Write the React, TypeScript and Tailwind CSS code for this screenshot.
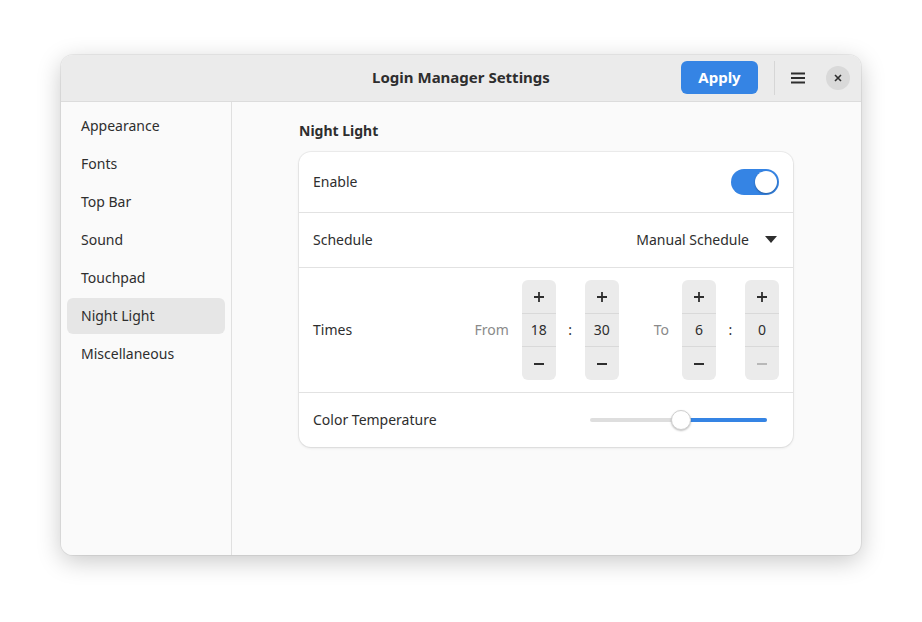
import React from "react";

const font = { fontFamily: '"Noto Sans", "Open Sans", sans-serif' };

function Spin({ value, minusDisabled }: { value: string; minusDisabled?: boolean }) {
  return (
    <div className="flex w-[34px] flex-col overflow-hidden rounded-[6px] bg-[#ebebeb] text-[#2e2e2e]">
      <div className="flex h-[34px] items-center justify-center border-b border-[#d9d9d9]">
        <svg width="12" height="12" viewBox="0 0 12 12"><path d="M6 1v10M1 6h10" stroke="#2e2e2e" strokeWidth="1.8" /></svg>
      </div>
      <div className="flex h-[32px] items-center justify-center pb-[1px] text-[14px]">{value}</div>
      <div className="flex h-[34px] items-center justify-center border-t border-[#d9d9d9]">
        <svg width="12" height="12" viewBox="0 0 12 12"><path d="M1 6h10" stroke={minusDisabled ? "#b8b8b8" : "#2e2e2e"} strokeWidth="1.8" /></svg>
      </div>
    </div>
  );
}

export default function App() {
  const items = ["Appearance", "Fonts", "Top Bar", "Sound", "Touchpad", "Night Light", "Miscellaneous"];
  return (
    <div className="flex h-[622px] w-[922px] bg-white pl-[61px] pt-[55px]" style={font}>
      <div className="flex h-[500px] w-[800px] flex-col overflow-hidden rounded-[12px] bg-[#fafafa] shadow-[0_0_0_1px_rgba(0,0,0,0.06),0_6px_24px_rgba(0,0,0,0.22)]">
        <div className="relative flex h-[47px] shrink-0 items-center border-b border-[#dcdcdc] bg-[#ebebeb] pb-[1px]">
          <div className="absolute inset-0 flex items-center justify-center pb-[1px] text-[15px] font-bold text-[#2e2e2e]">Login Manager Settings</div>
          <div className="relative ml-auto flex items-center pr-[11px]">
            <div className="flex h-[33px] w-[77px] items-center justify-center rounded-[6px] bg-[#3584e4] text-[15px] font-bold text-white">Apply</div>
            <div className="ml-[16px] h-[34px] w-px bg-[#d6d6d6]" />
            <div className="ml-[15px] flex h-[24px] w-[16px] items-center justify-center">
              <svg width="16" height="14" viewBox="0 0 16 14"><path d="M1 2.5h14M1 7h14M1 11.5h14" stroke="#2e2e2e" strokeWidth="1.8" /></svg>
            </div>
            <div className="ml-[20px] flex h-[24px] w-[24px] items-center justify-center rounded-full bg-[#d9d9d9]">
              <svg width="8" height="8" viewBox="0 0 8 8"><path d="M1 1l6 6M7 1L1 7" stroke="#2e2e2e" strokeWidth="1.6" /></svg>
            </div>
          </div>
        </div>
        <div className="flex min-h-0 flex-1">
          <div className="flex w-[171px] shrink-0 flex-col border-r border-[#e0e0e0] bg-[#fafafa] px-[6px] pt-[6px]">
            {items.map((it) => (
              <div
                key={it}
                className={`mb-[2px] flex h-[36px] items-center rounded-[6px] px-[14px] pb-[1px] text-[14px] text-[#2e2e2e] ${it === "Night Light" ? "bg-[#e6e6e6]" : ""}`}
              >
                {it}
              </div>
            ))}
          </div>
          <div className="flex flex-1 flex-col pl-[67px] pt-[18px]">
            <div className="mb-[12px] h-[20px] text-[14px] font-bold text-[#2e2e2e]">Night Light</div>
            <div className="w-[494px] rounded-[12px] bg-white text-[14px] text-[#2e2e2e] shadow-[0_0_0_1px_rgba(0,0,0,0.05),0_1px_3px_rgba(0,0,0,0.1)]">
              <div className="flex h-[61px] items-center justify-between border-b border-[#e2e2e2] px-[14px] pb-[1px]">
                <span>Enable</span>
                <div className="flex h-[26px] w-[48px] items-center justify-end rounded-full bg-[#3584e4] p-[2px]">
                  <div className="h-[22px] w-[22px] rounded-full bg-white shadow-[0_1px_2px_rgba(0,0,0,0.3)]" />
                </div>
              </div>
              <div className="flex h-[55px] items-center justify-between border-b border-[#e2e2e2] px-[14px] pb-[1px]">
                <span>Schedule</span>
                <div className="flex items-center">
                  <span>Manual Schedule</span>
                  <svg className="ml-[16px] mr-[2px]" width="12" height="7" viewBox="0 0 12 7"><path d="M0 0h12L6 7z" fill="#2e2e2e" /></svg>
                </div>
              </div>
              <div className="flex h-[125px] items-center border-b border-[#e2e2e2] px-[14px]">
                <span className="pb-[2px]">Times</span>
                <div className="ml-auto flex items-center">
                  <span className="mr-[13px] pb-[2px] text-[#8a8a8a]">From</span>
                  <Spin value="18" />
                  <span className="w-[29px] pb-[2px] text-center">:</span>
                  <Spin value="30" />
                  <span className="ml-[35px] mr-[13px] pb-[2px] text-[#8a8a8a]">To</span>
                  <Spin value="6" />
                  <span className="w-[29px] pb-[2px] text-center">:</span>
                  <Spin value="0" minusDisabled />
                </div>
              </div>
              <div className="flex h-[54px] items-center px-[14px]">
                <span className="pb-[1px]">Color Temperature</span>
                <div className="relative ml-auto mr-[12px] h-[20px] w-[177px]">
                  <div className="absolute left-0 right-0 top-[8px] h-[4px] rounded-full bg-[#dedede]" />
                  <div className="absolute left-[91px] right-0 top-[8px] h-[4px] rounded-full bg-[#3584e4]" />
                  <div className="absolute left-[81px] top-0 h-[20px] w-[20px] rounded-full border border-[#d0d0d0] bg-white shadow-[0_1px_2px_rgba(0,0,0,0.25)]" />
                </div>
              </div>
            </div>
          </div>
        </div>
      </div>
    </div>
  );
}
